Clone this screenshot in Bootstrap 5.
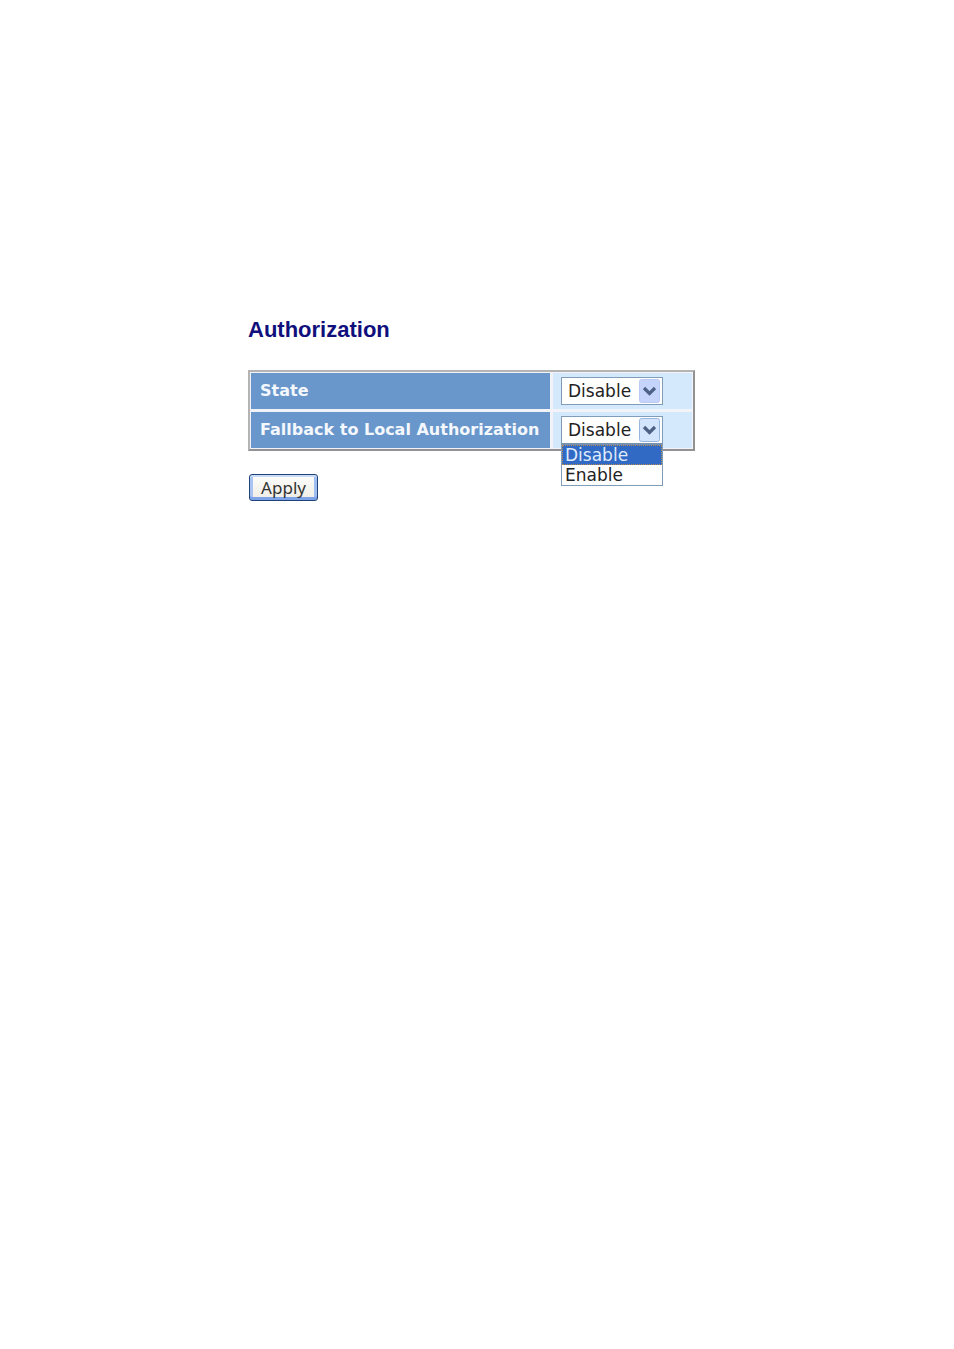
<!DOCTYPE html>
<html lang="en">
<head>
<meta charset="utf-8">
<meta name="viewport" content="width=device-width, initial-scale=1">
<title>Authorization</title>
<link href="https://cdn.jsdelivr.net/npm/bootstrap@5.3.0/dist/css/bootstrap.min.css" rel="stylesheet">
<style>
  body { background: #fff; color: #222; font-family: "DejaVu Sans", sans-serif; font-size: 17px; line-height: 20px; }
  .settings-page { padding: 318px 16px 48px 26%; }
  .page-title { color: #10107c; font: bold 22px/24px "Liberation Sans", sans-serif; margin-bottom: 28px; }
  .settings-table { border: 2px solid; border-color: #b4b4b4 #929292 #929292 #b4b4b4; border-collapse: separate; border-spacing: 0; background: #f1f3f8; }
  .settings-table th, .settings-table td { height: 38px; padding: 0 9px 1px; border: 1px solid #f1f3f8; vertical-align: middle; }
  .settings-table th { background: #6996cb; color: #f4f8fd; font-weight: bold; font-size: 16px; width: 301px; white-space: nowrap; }
  .settings-table td { background: #d5e9fd; width: 142px; border-left-width: 2px; padding-left: 8px; }
  .settings-table tr + tr > * { height: 39px; border-top-width: 2px; }
  .picker { width: 102px; }
  .picker select { width: 100%; height: 28px; padding: 0 0 0 6px; appearance: none; border: 1px solid #7f9db9; border-radius: 0; background: #fff; color: #222; }
  .picker-arrow { right: 2px; top: 2px; width: 22px; height: 24px; pointer-events: none; }
  .options { top: 27px; left: 0; right: 0; z-index: 2; border: 1px solid #7f9db9; border-top: 2px solid #7890b0; background: #fff; }
  .options li { padding: 0 3px; height: 20px; line-height: 20px; }
  .options .chosen { background: #316ac5; color: #dfeafa; outline: 1px dotted #b98d52; outline-offset: -1px; }
  .apply-btn { margin: 23px 0 0 1px; width: 69px; height: 27px; padding: 0; border: 1px solid #1c4478; border-radius: 3px; background: linear-gradient(#fdfdfb, #eeece4); box-shadow: inset 0 2px #cbdcf8, inset 0 -3px #7da2e8, inset 3px 0 #a9c4f2, inset -3px 0 #a0bdf0; color: #333; font: 17px/20px "Noto Sans", sans-serif; }
</style>
</head>
<body>
<main class="settings-page">
  <h1 class="page-title">Authorization</h1>
  <form>
    <table class="settings-table">
      <tbody>
        <tr>
          <th scope="row"><label for="state">State</label></th>
          <td>
            <div class="picker position-relative">
              <select id="state" class="d-block"><option>Disable</option><option>Enable</option></select>
              <svg class="picker-arrow position-absolute" viewBox="0 0 22 24" aria-hidden="true">
                <rect x="0.5" y="0.5" width="20" height="23" rx="2" fill="#c5d4fb" stroke="#bccaf3"/>
                <path d="M5 9l5.500 5.500L16 9" fill="none" stroke="#4d6185" stroke-width="3.200"/>
              </svg>
            </div>
          </td>
        </tr>
        <tr>
          <th scope="row"><label for="fallback">Fallback to Local Authorization</label></th>
          <td>
            <div class="picker position-relative">
              <select id="fallback" class="d-block"><option>Disable</option><option>Enable</option></select>
              <svg class="picker-arrow position-absolute" viewBox="0 0 22 24" aria-hidden="true">
                <rect x="0.5" y="0.5" width="20" height="23" rx="2" fill="#d3e4fd" stroke="#98b5e0"/>
                <path d="M5 9l5.500 5.500L16 9" fill="none" stroke="#4d6185" stroke-width="3.200"/>
              </svg>
              <ul class="options list-unstyled position-absolute mb-0" role="listbox" aria-label="Fallback to Local Authorization">
                <li class="chosen" role="option" aria-selected="true">Disable</li>
                <li role="option" aria-selected="false">Enable</li>
              </ul>
            </div>
          </td>
        </tr>
      </tbody>
    </table>
    <button type="button" class="apply-btn">Apply</button>
  </form>
</main>
<script src="https://cdn.jsdelivr.net/npm/bootstrap@5.3.0/dist/js/bootstrap.bundle.min.js"></script>
</body>
</html>
